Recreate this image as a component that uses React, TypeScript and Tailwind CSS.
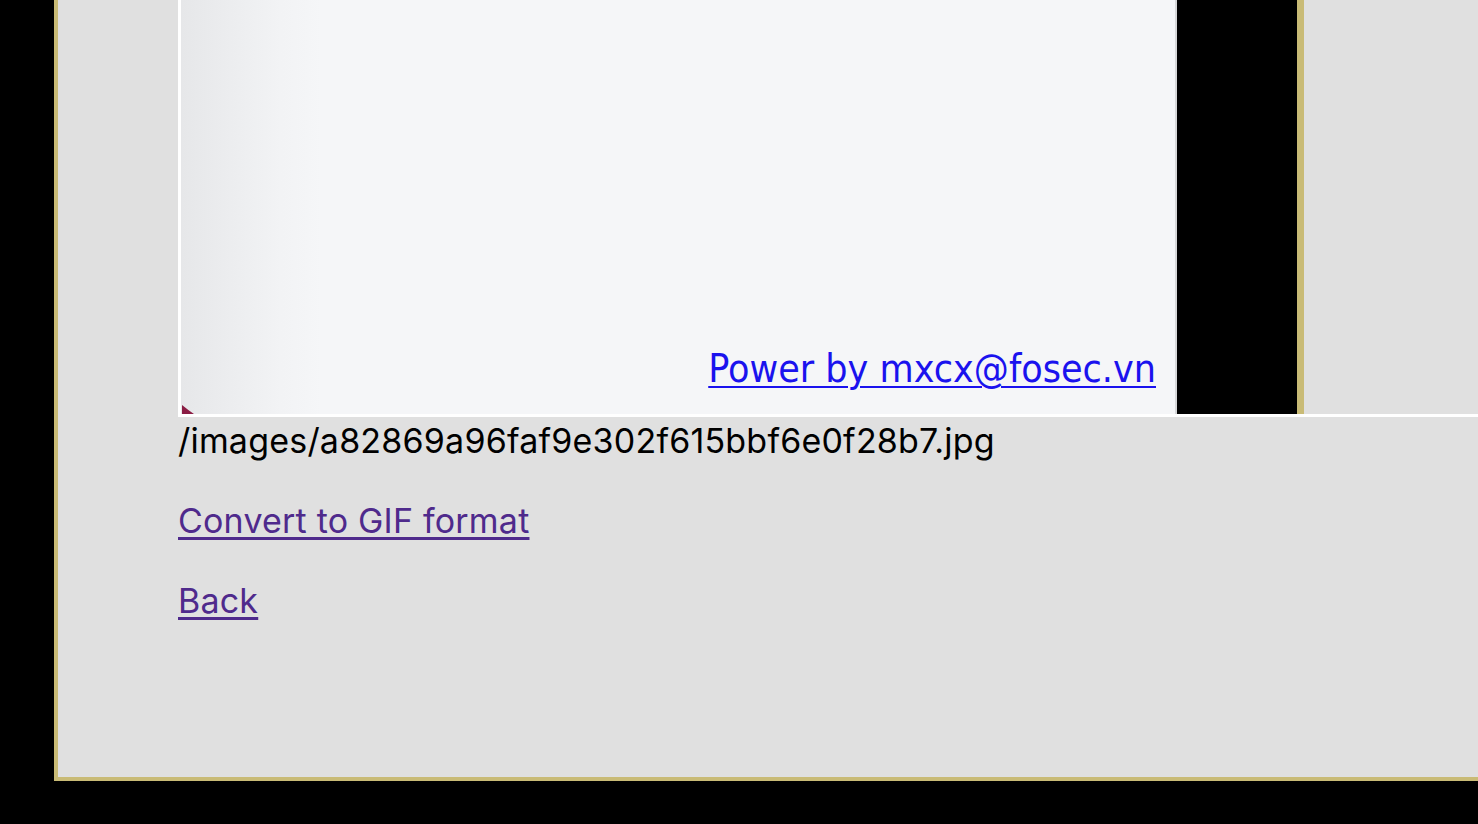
export default function App() {
    return (
        <div className="h-[824px] w-full overflow-hidden bg-black" style={{ fontFamily: 'Inter, "Noto Sans", sans-serif' }}>
            {/* page frame */}
            <div className="ml-[54px] h-[781px] overflow-hidden border-b-4 border-l-4 border-[#c9bb76] bg-[#e0e0e0] pl-[120px]">
                {/* uploaded image (scrolled, top cut off) */}
                <div className="flex h-[417px] w-[1500px] border-b-[3px] border-l-[3px] border-white">
                    <div className="relative flex w-[996px] flex-col items-end justify-end border-r-2 border-[#d6d7d9] bg-[linear-gradient(to_right,#e6e7e9,#f2f3f5_100px,#f5f6f8_140px)] pb-[25px] pr-[19px]">
                        <a
                            href="#"
                            className="text-[39px] leading-[40px] text-[#1a12ee] underline decoration-2 underline-offset-[4px]"
                            style={{ fontFamily: '"DejaVu Sans Condensed", "DejaVu Sans", Verdana, sans-serif' }}
                        >
                            Power by mxcx@fosec.vn
                        </a>
                        <svg className="absolute bottom-0 left-[1px]" width="12" height="9" viewBox="0 0 12 9">
                            <path d="M0 0 Q6 5 12 9 L0 9 Z" fill="#8b1d44" />
                        </svg>
                    </div>
                    <div className="w-[120px] bg-black" />
                    <div className="w-[7px] bg-[#c9bb76]" />
                    <div className="flex-1 bg-[#e0e0e0]" />
                </div>

                {/* file info */}
                <p className="text-[34px] leading-[48px] tracking-[0.2px] text-black">/images/a82869a96faf9e302f615bbf6e0f28b7.jpg</p>
                <p className="mt-[32px] text-[34px] leading-[48px] tracking-[0.2px]">
                    <a href="#" className="text-[#4f2a8c] underline underline-offset-[4px]">
                        Convert to GIF format
                    </a>
                </p>
                <p className="mt-[32px] text-[34px] leading-[48px] tracking-[0.2px]">
                    <a href="#" className="text-[#4f2a8c] underline underline-offset-[4px]">
                        Back
                    </a>
                </p>
            </div>
        </div>
    );
}
